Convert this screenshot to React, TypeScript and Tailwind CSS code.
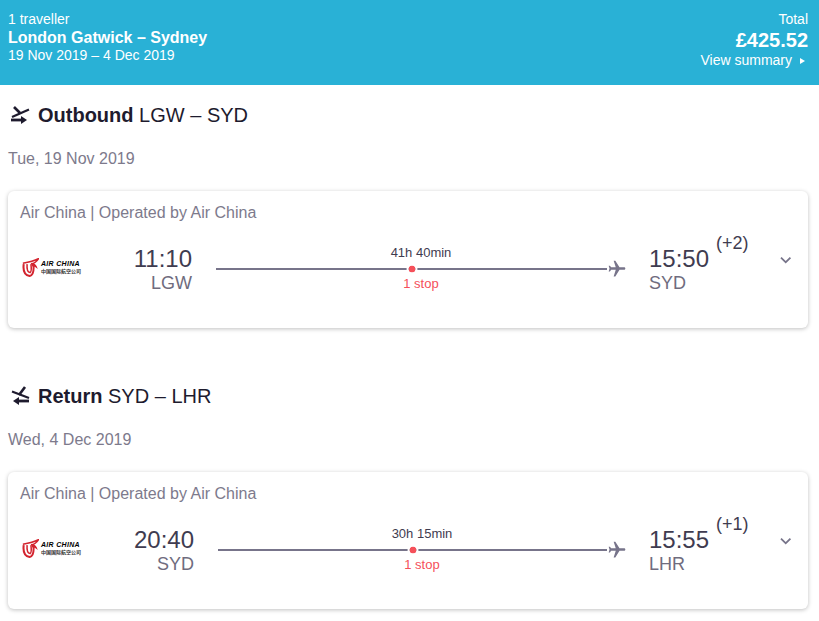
import { MdFlight, MdKeyboardArrowDown } from "react-icons/md";

function LegIcon({ back }: { back?: boolean }) {
  return (
    <svg viewBox="0 0 20 20" className="w-5 h-5 text-[#1e1b2e]" fill="none" stroke="currentColor" strokeWidth="2.2">
      {back ? (
        <>
          <path d="M2 5.500l17 6.500" />
          <path d="M15 1l-6 8" strokeWidth="2.6" />
          <path d="M19 15H8" strokeWidth="2.8" />
          <path d="M9 11l-6 4 6 4z" fill="currentColor" stroke="none" />
        </>
      ) : (
        <>
          <path d="M2 12L19 4.500" />
          <path d="M4 2l6 6" strokeWidth="2.6" />
          <path d="M1 15h11" strokeWidth="2.8" />
          <path d="M11 11l6 4-6 4z" fill="currentColor" stroke="none" />
        </>
      )}
    </svg>
  );
}

function AirChinaLogo() {
  return (
    <div className="flex items-center w-[58px] h-[20px]">
      <svg viewBox="0 0 20 22" className="w-[17px] h-[19px] shrink-0" fill="none" stroke="#d3232e">
        <path d="M2 7c-1 8 1 13 7 14 5-1 5-7 4.500-13" strokeWidth="2.400" />
        <path d="M6 7c-.5 6 .5 9.500 3.500 10 2-1 1.500-6 1-10" strokeWidth="1.800" />
        <path d="M1 6c6-1 12-2 18.500-5.500-2 3.500-6 6-9 6 3 0 5 1 6 3.500-2-1.500-4-1.500-5-1.500" strokeWidth="1.800" />
      </svg>
      <div className="ml-[2px] flex flex-col">
        <span className="text-[7px] leading-[8px] font-bold italic tracking-[0.3px] text-black whitespace-nowrap">AIR CHINA</span>
        <span className="text-[5px] leading-[6px] font-bold text-[#333] whitespace-nowrap font-['Noto_Sans_CJK_SC',sans-serif]">中国国际航空公司</span>
      </div>
    </div>
  );
}

type Leg = {
  bold: string;
  route: string;
  date: string;
  back?: boolean;
  depart: string;
  from: string;
  departWidth: string;
  duration: string;
  arrive: string;
  to: string;
  plus: string;
};

const legs: Leg[] = [
  { bold: "Outbound", route: "LGW – SYD", date: "Tue, 19 Nov 2019", depart: "11:10", from: "LGW", departWidth: "w-[112px]", duration: "41h 40min", arrive: "15:50", to: "SYD", plus: "(+2)" },
  { bold: "Return", route: "SYD – LHR", date: "Wed, 4 Dec 2019", back: true, depart: "20:40", from: "SYD", departWidth: "w-[114px]", duration: "30h 15min", arrive: "15:55", to: "LHR", plus: "(+1)" },
];

function LegSection({ leg }: { leg: Leg }) {
  return (
    <section className="pl-2 pr-[11px]">
      <h2 className="flex items-center h-[30px] gap-[8px] pl-[2px] text-[20px] text-[#1e1b2e]">
        <LegIcon back={leg.back} />
        <span>
          <b>{leg.bold}</b> {leg.route}
        </span>
      </h2>
      <p className="mt-[19px] h-[20px] leading-[20px] text-[16px] text-[#7d7a8c]">{leg.date}</p>
      <div className="mt-[22px] h-[137px] rounded-[6px] bg-white shadow-[0_1px_4px_rgba(0,0,0,0.25)] px-3 pt-[12px]">
        <p className="h-[20px] leading-[20px] text-[16px] text-[#7d7a8c]">Air China | Operated by Air China</p>
        <div className="flex mt-[9px]">
          <div className="w-[60px] pt-[25px] pl-[2px]">
            <AirChinaLogo />
          </div>
          <div className={`${leg.departWidth} text-right`}>
            <div className="text-[24px] leading-[28px] mt-[13px] text-[#3f3c50]">{leg.depart}</div>
            <div className="text-[18px] leading-[20px] text-[#6f6c7e]">{leg.from}</div>
          </div>
          <div className="flex-1 ml-[24px] mr-[9px]">
            <div className="text-center text-[13px] leading-[14px] mt-[14px] text-[#3f3c50]">{leg.duration}</div>
            <div className="flex items-center h-[16px] mt-[1px]">
              <div className="relative flex-1 h-[2px] bg-[#77748a]">
                <div className="absolute left-1/2 top-1/2 -translate-x-1/2 -translate-y-1/2 w-[7px] h-[7px] rounded-full bg-[#f5505a] outline-2 outline-white" />
              </div>
              <MdFlight className="w-[20px] h-[20px] rotate-90 text-[#77748a] -mr-[1px]" />
            </div>
            <div className="text-center text-[13px] leading-[14px] text-[#f5505a]">1 stop</div>
          </div>
          <div className="w-[161px] pl-[14px] flex shrink-0">
            <div>
              <div className="text-[24px] leading-[28px] mt-[13px] text-[#3f3c50]">{leg.arrive}</div>
              <div className="text-[18px] leading-[20px] text-[#6f6c7e]">{leg.to}</div>
            </div>
            <div className="text-[18px] leading-[20px] ml-[7px] mt-[1px] text-[#3f3c50]">{leg.plus}</div>
            <MdKeyboardArrowDown className="w-[26px] h-[26px] ml-[26px] mt-[15px] text-[#77748a]" />
          </div>
        </div>
      </div>
    </section>
  );
}

export default function App() {
  return (
    <div className="w-[819px] h-[621px] overflow-hidden bg-white font-['Liberation_Sans',Arial,sans-serif]">
      <header className="h-[85px] bg-[#29b1d6] text-white flex justify-between px-2 pt-[11px]">
        <div>
          <div className="text-[14px] leading-[17px]">1 traveller</div>
          <div className="text-[16px] leading-[19px] font-bold">London Gatwick – Sydney</div>
          <div className="text-[14px] leading-[17px]">19 Nov 2019 – 4 Dec 2019</div>
        </div>
        <div className="text-right pr-[3px]">
          <div className="text-[14px] leading-[17px]">Total</div>
          <div className="text-[20px] leading-[24px] font-bold">£425.52</div>
          <div className="text-[14px] leading-[17px] flex items-center justify-end">
            View summary
            <span className="ml-[8px] mr-[3px] w-0 h-0 border-y-[3px] border-y-transparent border-l-[5px] border-l-white" />
          </div>
        </div>
      </header>
      <div className="pt-[15px] flex flex-col gap-[53px]">
        {legs.map((leg) => (
          <LegSection key={leg.bold} leg={leg} />
        ))}
      </div>
    </div>
  );
}
